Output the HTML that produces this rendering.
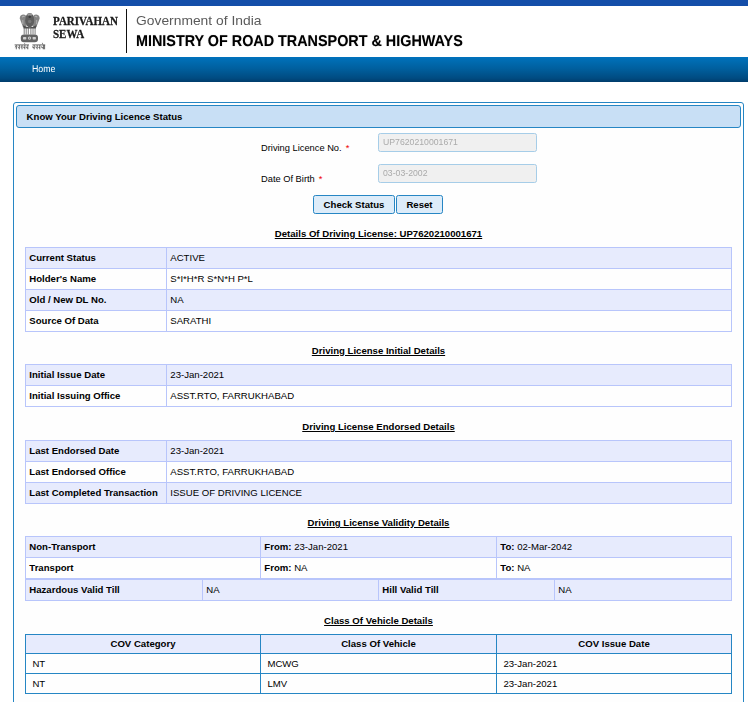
<!DOCTYPE html>
<html><head><meta charset="utf-8">
<style>
html,body{margin:0;padding:0;background:#fff;}
body{width:748px;height:702px;position:relative;overflow:hidden;font-family:"Liberation Sans",sans-serif;font-size:9.6px;color:#000;}
.abs{position:absolute;}
#topbar{left:0;top:0;width:748px;height:6px;background:#144ea9;}
#nav{left:0;top:57px;width:748px;height:24.6px;background:linear-gradient(#0072bc 0%,#00609f 45%,#004b81 85%,#003c6b 100%);}
#nav span{position:absolute;left:31.5px;top:7.3px;color:#fff;font-size:9.6px;text-rendering:geometricPrecision;transform:scale(0.916,1.02);transform-origin:0 0;}
#vline{left:125.8px;top:9px;width:1.4px;height:44px;background:#111;}
#pari{left:53px;top:15px;font-family:"Liberation Serif",serif;font-weight:bold;font-size:11px;line-height:11.8px;color:#1a1a1a;letter-spacing:0;transform:scaleY(1.1);transform-origin:0 0;-webkit-text-stroke:0.25px #1a1a1a;}
#goi{left:135.5px;top:13.6px;font-size:12.6px;color:#5a5a5a;white-space:nowrap;transform:scaleX(1.099);transform-origin:0 0;}
#morth{text-rendering:geometricPrecision;left:136px;top:33.2px;font-size:15.2px;font-weight:bold;color:#000;white-space:nowrap;transform:scale(0.946,1.03);transform-origin:0 0;text-shadow:0 0 1px rgba(0,0,0,0.35);}
#panel{left:13px;top:102px;width:729px;height:610px;border:1px solid #2686c4;border-radius:3px;background:#fefefe;}
#phead{left:16px;top:105px;width:723px;height:21px;border:1px solid #2686c4;border-radius:3px;background:#c8dff5;}
#phead span{position:absolute;left:9.6px;top:5px;font-weight:bold;font-size:9.6px;}
.lbl{font-size:9.3px;white-space:nowrap;}
.req{color:#e00;margin-left:1.5px;}
.inp{width:157px;height:17px;border:1px solid #a6cde8;border-radius:2.4px;background:#f0f0f0;color:#aaa;font-size:8.7px;}
.inp span{position:absolute;left:4px;top:2.2px;font-size:9.5px;transform:scaleX(0.915);transform-origin:0 0;white-space:nowrap;}
.btn{height:17px;border:1px solid #2686c4;border-radius:2.4px;background:#ddecf9;font-weight:bold;font-size:9.6px;text-align:center;line-height:17px;}
.ttl{left:25px;width:707px;text-align:center;font-weight:bold;text-decoration:underline;font-size:9.6px;white-space:nowrap;}
table{position:absolute;border-collapse:collapse;table-layout:fixed;font-size:9.6px;}
td,th{border:1px solid #b8c5fb;height:19px;padding:0 0 1px 3.3px;text-align:left;vertical-align:middle;white-space:nowrap;overflow:hidden;font-weight:normal;}
td.b{font-weight:bold;}
tr.o td{background:#e7ebfd;}
tr.e td{background:#fefefe;}
</style></head><body>
<div class="abs" id="topbar"></div>
<svg class="abs" id="emb" style="left:10px;top:8px;" width="40" height="48" viewBox="10 8 40 48">
<defs><filter id="bl" x="-10%" y="-10%" width="120%" height="120%"><feGaussianBlur stdDeviation="0.42"/></filter></defs>
<g filter="url(#bl)">
<path d="M19.8 18.5 Q19.6 15.2 23 14.6 Q26.2 14.4 26.6 18 L26.2 27.6 L23 27.2 Q21.6 23.5 19.8 18.5 Z" fill="#858585"/>
<path d="M39.6 18.5 Q39.8 15.2 36.4 14.6 Q33.2 14.4 32.8 18 L33.2 27.6 L36.4 27.2 Q37.8 23.5 39.6 18.5 Z" fill="#858585"/>
<ellipse cx="29.7" cy="20.2" rx="4.5" ry="7.3" fill="#5e5e5e"/>
<ellipse cx="29.7" cy="14.6" rx="2.6" ry="1.3" fill="#9a9a9a"/>
<circle cx="29.7" cy="16.8" r="1.2" fill="#3c3c3c"/>
<circle cx="29.7" cy="21.5" r="1.8" fill="#777"/>
<path d="M22.2 17.2 q1 -1.4 2.4 -0.8 M37.2 17.2 q-1 -1.4 -2.4 -0.8" stroke="#b5b5b5" stroke-width="1.1" fill="none"/>
<path d="M22.8 20 v4 M36.6 20 v4" stroke="#a8a8a8" stroke-width="1.2" fill="none"/>
<path d="M23 25.2 Q29.7 29.5 36.4 25.2 L35.8 28.6 L23.6 28.6 Z" fill="#505050"/>
<g stroke="#5a5a5a" stroke-width="0.8">
<line x1="24.2" y1="28" x2="24.2" y2="34.5"/><line x1="26.2" y1="28" x2="26.2" y2="34.5"/><line x1="28.3" y1="28" x2="28.3" y2="34.5"/>
<line x1="30.9" y1="28" x2="30.9" y2="34.5"/><line x1="33" y1="28" x2="33" y2="34.5"/><line x1="35.1" y1="28" x2="35.1" y2="34.5"/>
</g>
<rect x="20.8" y="34.4" width="17.2" height="7.8" rx="3.2" fill="#636363"/>
<rect x="23" y="36.9" width="3.3" height="2.5" rx="0.6" fill="#cfcfcf"/>
<circle cx="29.5" cy="38.1" r="1.7" fill="#cfcfcf"/><circle cx="29.5" cy="38.1" r="0.7" fill="#666"/>
<rect x="32.6" y="36.9" width="3.3" height="2.5" rx="0.6" fill="#cfcfcf"/>
<path d="M24.5 43.2 L24.9 44.4 M42.3 42.8 L42.8 44.4" stroke="#555" stroke-width="0.7"/>
<g stroke="#444" stroke-width="0.8" fill="none">
<path d="M14.6 44.9 H29 M32.4 44.9 H45.2"/>
<path d="M16.3 45 V49.3 M14.9 47.3 q1 -1.4 1.4 0 M19.3 45 V49.3 M17.6 46.8 q1.2 1.6 1.7 0.2 M22 45 V49.3 M20.6 47 h1.4 M24.8 45 V49.3 M23.3 46.6 q0.2 1.6 1.5 1 M27.8 45 V49.3 M26.2 46.5 q-0.4 1.8 1.6 1.4"/>
<path d="M34.2 45 V49.3 M32.6 46.4 q-0.2 2 1.6 1.2 M37.2 45 V49.3 M35.4 46.8 q1 1.6 1.8 0 M39.8 45 V49.3 M38.4 47.4 h1.4 M43.4 45 V49.3 M41.4 46.4 q0 2 2 1.4 M44.6 45 V49.3"/>
</g>
</g></svg>
<div class="abs" id="pari">PARIVAHAN<br>SEWA</div>
<div class="abs" id="vline"></div>
<div class="abs" id="goi">Government of India</div>
<div class="abs" id="morth">MINISTRY OF ROAD TRANSPORT &amp; HIGHWAYS</div>
<div class="abs" id="nav"><span>Home</span></div>
<div class="abs" id="panel"></div>
<div class="abs" id="phead"><span>Know Your Driving Licence Status</span></div>

<div class="abs lbl" style="left:261px;top:143px;">Driving Licence No. <span class="req">*</span></div>
<div class="abs lbl" style="left:261px;top:174px;">Date Of Birth <span class="req">*</span></div>
<div class="abs inp" style="left:378px;top:133px;"><span>UP7620210001671</span></div>
<div class="abs inp" style="left:378px;top:164px;"><span>03-03-2002</span></div>
<div class="abs btn" style="left:313px;top:195px;width:80px;">Check Status</div>
<div class="abs btn" style="left:396px;top:195px;width:45px;">Reset</div>

<div class="abs ttl" style="top:228px;">Details Of Driving License: UP7620210001671</div>
<table style="left:25px;top:247px;width:707px;">
<colgroup><col style="width:141px"><col></colgroup>
<tr class="o"><td class="b">Current Status</td><td>ACTIVE</td></tr>
<tr class="e"><td class="b">Holder's Name</td><td>S*I*H*R S*N*H P*L</td></tr>
<tr class="o"><td class="b">Old / New DL No.</td><td>NA</td></tr>
<tr class="e"><td class="b">Source Of Data</td><td>SARATHI</td></tr>
</table>

<div class="abs ttl" style="top:345px;">Driving License Initial Details</div>
<table style="left:25px;top:364px;width:707px;">
<colgroup><col style="width:141px"><col></colgroup>
<tr class="o"><td class="b">Initial Issue Date</td><td>23-Jan-2021</td></tr>
<tr class="e"><td class="b">Initial Issuing Office</td><td>ASST.RTO, FARRUKHABAD</td></tr>
</table>

<div class="abs ttl" style="top:421px;">Driving License Endorsed Details</div>
<table style="left:25px;top:440px;width:707px;">
<colgroup><col style="width:141px"><col></colgroup>
<tr class="o"><td class="b">Last Endorsed Date</td><td>23-Jan-2021</td></tr>
<tr class="e"><td class="b">Last Endorsed Office</td><td>ASST.RTO, FARRUKHABAD</td></tr>
<tr class="o"><td class="b">Last Completed Transaction</td><td>ISSUE OF DRIVING LICENCE</td></tr>
</table>

<div class="abs ttl" style="top:517px;">Driving License Validity Details</div>
<table style="left:25px;top:536px;width:707px;">
<colgroup><col style="width:235px"><col style="width:236px"><col></colgroup>
<tr class="o"><td class="b">Non-Transport</td><td><b>From:</b> 23-Jan-2021</td><td><b>To:</b> 02-Mar-2042</td></tr>
<tr class="e"><td class="b">Transport</td><td><b>From:</b> NA</td><td><b>To:</b> NA</td></tr>
</table>
<table style="left:25px;top:579px;width:707px;">
<colgroup><col style="width:177px"><col style="width:176px"><col style="width:176px"><col></colgroup>
<tr class="o"><td class="b">Hazardous Valid Till</td><td>NA</td><td class="b">Hill Valid Till</td><td>NA</td></tr>
</table>

<div class="abs ttl" style="top:615px;">Class Of Vehicle Details</div>
<table id="cov" style="left:25px;top:634px;width:707px;">
<colgroup><col style="width:235px"><col style="width:236px"><col></colgroup>
<tr class="o"><th>COV Category</th><th>Class Of Vehicle</th><th>COV Issue Date</th></tr>
<tr class="e"><td>NT</td><td>MCWG</td><td>23-Jan-2021</td></tr>
<tr class="e"><td>NT</td><td>LMV</td><td>23-Jan-2021</td></tr>
</table>
<style>
#cov td,#cov th{border-color:#2686c4;height:18px;padding:0 0 1px 6.4px;}
#cov th{font-weight:bold;text-align:center;background:#e7ebfd;padding:0 0 2px 0;height:16px;}
</style>
</body></html>
